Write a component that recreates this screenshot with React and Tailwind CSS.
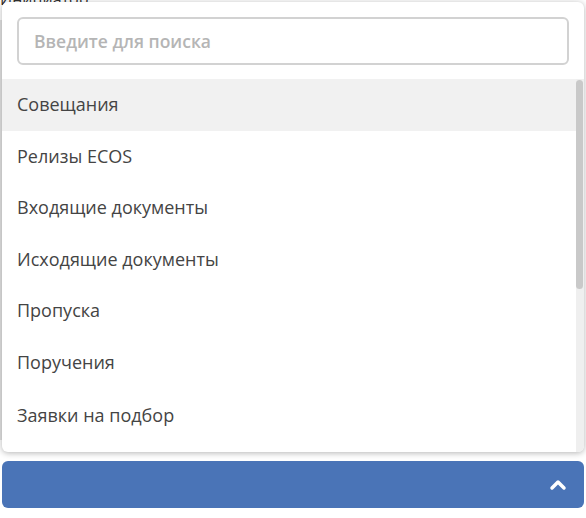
import React from "react";
import { ChevronUp } from "lucide-react";

const items = [
  "Совещания",
  "Релизы ECOS",
  "Входящие документы",
  "Исходящие документы",
  "Пропуска",
  "Поручения",
  "Заявки на подбор",
];

export default function App() {
  return (
    <div className="relative w-[586px] h-[518px] overflow-hidden bg-white font-['Open_Sans',sans-serif]">
      {/* page content behind the dropdown */}
      <div className="absolute left-0 top-[-13px] text-[16px] text-[#333]">Инициатор</div>
      <div className="absolute left-0 top-[20px] h-[420px] w-[2px] bg-[#e4e4e4]" />

      <div className="relative flex flex-col px-[2px] pt-[2px]">
        <div className="flex h-[450px] flex-col rounded-md bg-white shadow-[0_1px_6px_rgba(0,0,0,0.3)]">
          <div className="p-[15px] pb-[14px]">
            <input
              type="text"
              placeholder="Введите для поиска"
              className="h-[48px] w-full rounded-md border-2 border-[#d2d2d2] px-[15px] text-[17.5px] font-semibold text-[#333] placeholder:text-[#b5b5b5] outline-none"
            />
          </div>
          <div className="relative flex-1 overflow-hidden rounded-b-md">
            {items.map((item, i) => (
              <div
                key={item}
                className={
                  "flex items-center pl-[15px] pr-[24px] text-[18px] text-[#444] " +
                  (i === 0 ? "bg-[#f1f1f1] " : "") +
                  (i === 6 ? "h-[54.5px]" : "h-[51.5px]")
                }
              >
                {item}
              </div>
            ))}
            {/* scrollbar */}
            <div className="absolute right-0 top-0 bottom-0 w-[8px] bg-[#efefef]">
              <div className="mt-[1px] h-[209px] w-[7px] rounded-full bg-[#c9c9c9]" />
            </div>
          </div>
        </div>

        <button className="mt-[9px] flex h-[47px] items-center justify-end rounded-md bg-[#4a74b7] pr-[14px]">
          <ChevronUp className="text-white" size={24} strokeWidth={3.5} />
        </button>
      </div>
    </div>
  );
}
